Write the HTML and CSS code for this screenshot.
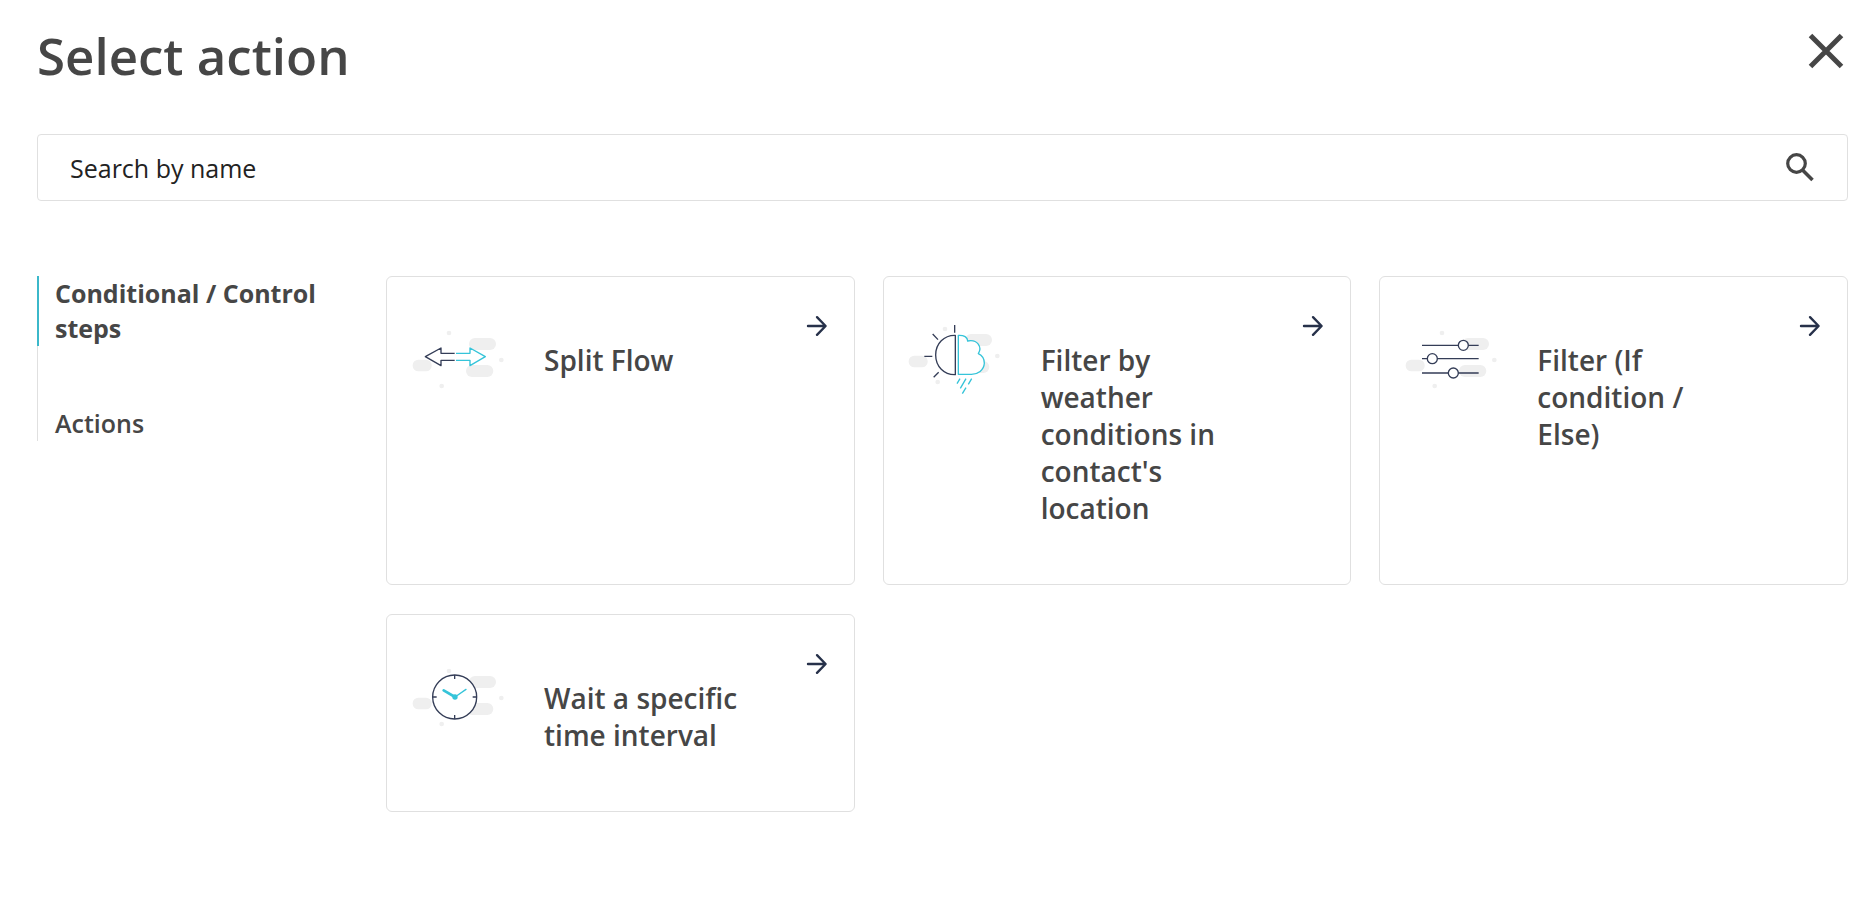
FILE: index.html
```
<!DOCTYPE html>
<html lang="en">
<head>
    <meta charset="UTF-8">
    <meta name="viewport" content="width=device-width, initial-scale=1.0">
    <title>Select action</title>
    <link rel="stylesheet" href="styles.css">
</head>
<body>
    <!-- shared icons -->
    <svg class="defs" width="0" height="0" aria-hidden="true">
        <symbol id="blobs" viewBox="0 0 360 270">
            <g fill="#efefef">
                <rect x="207" y="84" width="81" height="36" rx="18"/>
                <rect x="198" y="165" width="82" height="36" rx="18"/>
                <rect x="38" y="149" width="57" height="35" rx="17"/>
                <circle cx="147" cy="69" r="7"/>
                <circle cx="304" cy="150" r="7"/>
                <circle cx="125" cy="228" r="7"/>
            </g>
        </symbol>
        <symbol id="arrow" viewBox="0 0 24 24">
            <path d="M3 12h17M12 3.2l8.6 8.8-8.6 8.8" fill="none" stroke="#27314a" stroke-width="2.4" stroke-linecap="round" stroke-linejoin="round"/>
        </symbol>
    </svg>

    <header class="header">
        <h1>Select action</h1>
        <button class="close" type="button" aria-label="Close">
            <svg width="40" height="40" viewBox="0 0 40 40">
                <path d="M4.500 4.500l31 31M35.500 4.500l-31 31" stroke="#464646" stroke-width="5"/>
            </svg>
        </button>
    </header>

    <form class="search">
        <input type="text" placeholder="Search by name" aria-label="Search by name">
        <button type="submit" aria-label="Search">
            <svg width="32" height="32" viewBox="0 0 32 32">
                <circle cx="12.500" cy="11.500" r="8.800" fill="none" stroke="#464646" stroke-width="3.200"/>
                <path d="M18.500 18l10 10" stroke="#464646" stroke-width="3.600"/>
            </svg>
        </button>
    </form>

    <main class="content">
        <nav class="tabs">
            <a class="active" href="#control">Conditional / Control steps</a>
            <a href="#actions">Actions</a>
        </nav>

        <div class="cards" id="control">
            <button class="card" type="button">
                <svg class="icon" viewBox="0 0 360 270">
                    <use href="#blobs"/>
                    <g fill="#fff" stroke-width="4" stroke-linejoin="round">
                        <path d="M164 130H123V114L76 140L123 167V151H164" stroke="#343d57"/>
                        <path d="M168 130H210V114L256 140L210 167V151H168" stroke="#35c4d9"/>
                    </g>
                </svg>
                <span class="name">Split Flow</span>
                <svg class="arrow"><use href="#arrow"/></svg>
            </button>

            <button class="card" type="button">
                <svg class="icon" viewBox="0 0 360 270">
                    <use href="#blobs" x="-3" y="-12"/>
                    <g transform="translate(9 0)" fill="#fff" stroke-width="4" stroke-linejoin="round">
                        <path d="M166 76V194C132 195 107 169 107 135S132 75 166 76Z" stroke="#343d57"/>
                        <path d="M164 45V68M98 72L114 89M73 139H97M101 202L116 187" stroke="#343d57"/>
                        <path d="M175 76V193H212C234 194 252 180 253 160C253 147 246 136 235 131C247 112 233 87 203 93C203 82 192 75 175 76Z" stroke="#35c4d9"/>
                        <path d="M180 206L171 221M198 206L181 235M215 206L205 223M198 233L187 251" stroke="#35c4d9"/>
                    </g>
                </svg>
                <span class="name">Filter by weather conditions in contact's location</span>
                <svg class="arrow"><use href="#arrow"/></svg>
            </button>

            <button class="card" type="button">
                <svg class="icon" viewBox="0 0 360 270">
                    <use href="#blobs"/>
                    <g transform="translate(6 0)" fill="#fff" stroke="#343d57" stroke-width="4">
                        <path d="M81 106H251M81 146H251M81 189H251"/>
                        <circle cx="205" cy="106" r="15"/>
                        <circle cx="112" cy="146" r="15"/>
                        <circle cx="175" cy="189" r="15"/>
                    </g>
                </svg>
                <span class="name">Filter (If condition / Else)</span>
                <svg class="arrow"><use href="#arrow"/></svg>
            </button>

            <button class="card" type="button">
                <svg class="icon" viewBox="0 0 360 270">
                    <use href="#blobs"/>
                    <g transform="translate(0 6)">
                        <circle cx="164" cy="141" r="66" fill="#fff" stroke="#343d57" stroke-width="4"/>
                        <path d="M164 75V87M164 195V207M98 141H110M218 141H230" stroke="#343d57" stroke-width="4"/>
                        <path d="M165 141L198 118" stroke="#35c4d9" stroke-width="4" stroke-linecap="round"/>
                        <path d="M165 141L131 121" stroke="#35c4d9" stroke-width="8" stroke-linecap="round"/>
                        <circle cx="165" cy="141" r="8" fill="#35c4d9"/>
                    </g>
                </svg>
                <span class="name">Wait a specific time interval</span>
                <svg class="arrow"><use href="#arrow"/></svg>
            </button>
        </div>
    </main>
</body>
</html>
```

FILE: styles.css
```
* {
    box-sizing: border-box;
}
body {
    margin: 0;
    padding: 25px 26px 40px 37px;
    background-color: #fff;
    color: #464646;
    font-family: "Segoe UI", "Open Sans", sans-serif;
    font-size: 25px;
}
button {
    padding: 0;
    border: none;
    background: none;
    color: inherit;
    font: inherit;
    cursor: pointer;
}
svg {
    display: block;
}
.defs {
    position: absolute;
}
.header {
    display: flex;
    justify-content: space-between;
    align-items: flex-start;
    margin-bottom: 49px;
}
h1 {
    margin: 0;
    font-size: 51px;
    font-weight: 600;
    line-height: 60px;
}
.close {
    padding: 6px 2px;
}
.search {
    display: flex;
    align-items: center;
    height: 67px;
    padding: 0 31px 0 32px;
    border: 1px solid #e0e0e0;
    border-radius: 4px;
    margin-bottom: 75px;
}
.search input {
    flex: 1;
    padding: 2px 0 0;
    border: none;
    outline: none;
    background: none;
    font: inherit;
    line-height: 35px;
}
.search input::placeholder {
    color: #222;
    opacity: 1;
}
.content {
    display: grid;
    grid-template-columns: 320px 1fr;
    gap: 29px;
    align-items: start;
}
.tabs {
    display: flex;
    flex-direction: column;
    gap: 60px;
    border-left: 1px solid #e0e0e0;
}
.tabs a {
    margin-left: -1px;
    padding: 0 20px 0 16px;
    border-left: 2px solid transparent;
    color: #464646;
    font-weight: 600;
    line-height: 35px;
    text-decoration: none;
}
.tabs .active {
    border-color: #3bb8ca;
    font-weight: 700;
}
.cards {
    display: grid;
    grid-template-columns: repeat(3, 1fr);
    gap: 29px 28px;
}
.card {
    display: grid;
    grid-template-columns: 120px 1fr 24px;
    gap: 24px;
    align-content: start;
    align-items: start;
    padding: 33px 25px 57px 13px;
    border: 1px solid #e0e0e0;
    border-radius: 6px;
    text-align: left;
}
.icon {
    width: 120px;
    height: 90px;
}
.name {
    padding: 32px 32px 0 0;
    font-size: 28px;
    font-weight: 600;
    line-height: 37px;
}
.arrow {
    width: 24px;
    height: 24px;
    margin-top: 4px;
}
```
